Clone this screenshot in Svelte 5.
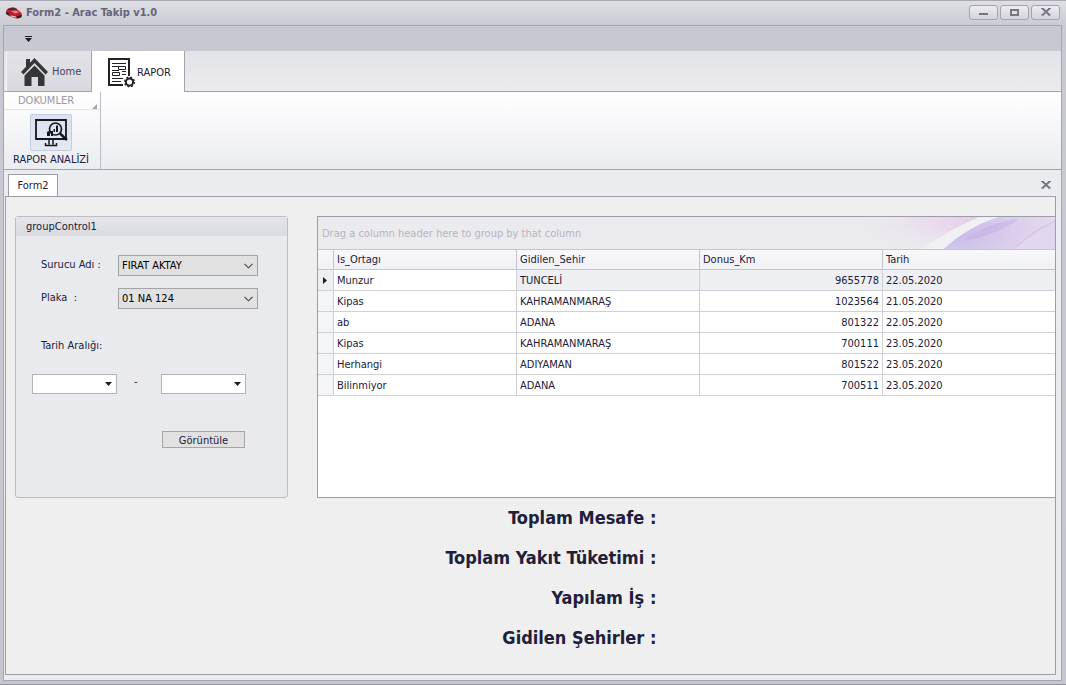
<script>
  let driver = $state('FIRAT AKTAY');
  let plate = $state('01 NA 124');
  let from = $state('');
  let to = $state('');

  const rows = [
    { partner: 'Munzur', city: 'TUNCELİ', km: 9655778, date: '22.05.2020' },
    { partner: 'Kipas', city: 'KAHRAMANMARAŞ', km: 1023564, date: '21.05.2020' },
    { partner: 'ab', city: 'ADANA', km: 801322, date: '22.05.2020' },
    { partner: 'Kipas', city: 'KAHRAMANMARAŞ', km: 700111, date: '23.05.2020' },
    { partner: 'Herhangi', city: 'ADIYAMAN', km: 801522, date: '23.05.2020' },
    { partner: 'Bilinmiyor', city: 'ADANA', km: 700511, date: '23.05.2020' }
  ];
  let current = $state(0);

  const totals = ['Toplam Mesafe :', 'Toplam Yakıt Tüketimi :', 'Yapılam İş :', 'Gidilen Şehirler :'];
</script>

{#snippet chevron()}
  <svg class="chevron" width="9" height="6" viewBox="0 0 9 6" aria-hidden="true">
    <path d="M.5 .8 4.5 4.8 8.5 .8" fill="none" stroke="#444" stroke-width="1.1" />
  </svg>
{/snippet}

{#snippet arrow()}
  <svg width="7" height="4" viewBox="0 0 7 4" aria-hidden="true"><path d="M0 0h7L3.5 4z" fill="#1b1b24" /></svg>
{/snippet}

{#snippet cross()}
  <svg width="10" height="8" viewBox="0 0 10 8" aria-hidden="true">
    <path d="M1.500 .5l7 6.500M8.500 .5l-7 6.500" stroke="#777782" stroke-width="2" />
    <path d="M0 0h3v1H0zM7 0h3v1H7zM0 6.500h3v1H0zM7 6.500h3v1H7z" fill="#777782" />
  </svg>
{/snippet}

<div class="window">
  <header class="titlebar">
    <svg width="16" height="12" viewBox="0 0 16 12" aria-hidden="true">
      <path d="M0 4 2 1.500 6 .5l4 .5 3 3 2.500 2 .5 3-2 2-4 .500-7-2.500-2.500-2z" fill="#b8222c" />
      <path d="M1.500 3 4 1l4-.5 3 2.500-3 .5-4-.5z" fill="#4b2b33" />
      <path d="M5 4l5-.5 3 2-4 1z" fill="#ee7f82" />
      <path d="M0 5l3 1v2.500L0 7zM11 9l5-1-1 2.500-4 1z" fill="#26222b" />
      <path d="M5 8.500l5 1v1l-5-1z" fill="#f0d6d8" />
    </svg>
    <h1>Form2 - Arac Takip v1.0</h1>
    <div class="caption-buttons">
      <button aria-label="Minimize"><svg width="10" height="8" viewBox="0 0 10 8"><path d="M0 5h9v2H0z" fill="#777782" /></svg></button>
      <button aria-label="Maximize"><svg width="9" height="7" viewBox="0 0 9 7"><path d="M1 1h7v5H1z" fill="none" stroke="#777782" stroke-width="2" /></svg></button>
      <button aria-label="Close">{@render cross()}</button>
    </div>
  </header>

  <div class="client">
    <div class="quickbar">
      <button aria-label="Customize Quick Access Toolbar">
        <svg width="7" height="6" viewBox="0 0 7 6"><path d="M0 0h7v1H0zM0 2h7L3.500 6z" fill="#1b1b24" /></svg>
      </button>
    </div>

    <nav class="tabs">
      <button class="tab">
        <svg width="27" height="28" viewBox="0 0 27 28" aria-hidden="true">
          <path d="M5 1h4v5l-4 4z" fill="#35363a" />
          <path d="M13.500 0 27 14l-2.500 2.500-11-11.500-11 11.500L0 14z" fill="#35363a" />
          <path d="M13.500 7.500l10 10V28H17v-9h-6.500v9H3.500V17.500z" fill="#35363a" />
        </svg>
        Home
      </button>
      <button class="tab active">
        <svg width="28" height="30" viewBox="0 0 28 30" aria-hidden="true">
          <path d="M21 18V1H1v26h14" fill="none" stroke="#222226" stroke-width="2" />
          <path d="M4 5.500h14M4 8.500h7M14 13.500h4M4 12.500h7M4 20.500h11M4 23.500h9" stroke="#222226" stroke-width="1" />
          <path d="M10.500 8.500h7v3h-7zM4.500 14.500h7v3h-7zM14 16.500h4" fill="none" stroke="#222226" />
          <circle cx="21.500" cy="24" r="3.600" fill="#fff" stroke="#222226" stroke-width="2" />
          <circle cx="21.500" cy="24" r="4.900" fill="none" stroke="#222226" stroke-width="1.400" stroke-dasharray="1.950 1.900" />
        </svg>
        RAPOR
      </button>
    </nav>

    <section class="ribbon">
      <div class="ribbon-group">
        <div class="group-caption">
          <span>DOKUMLER</span>
          <svg width="5" height="5" viewBox="0 0 5 5" aria-hidden="true"><path d="M5 0v5H0z" fill="#a3a3ab" /></svg>
        </div>
        <button class="large">
          <span class="picture">
            <svg width="34" height="30" viewBox="0 0 34 30" aria-hidden="true">
              <path d="M27 2H2v19h30V2h-5" fill="none" stroke="#17181c" stroke-width="1.800" />
              <path d="M15 21v5.500M19 21v5.500M11.500 25v2.500h11V25" fill="none" stroke="#17181c" stroke-width="1.500" />
              <path d="M13 18v-4l1.500-1L16 14v4zM17 18v-5h2v5z" fill="#17181c" />
              <path d="M19.500 14v-3h1.500v3zM22 14V7.500h2V14z" fill="#17181c" />
              <circle cx="21.500" cy="11" r="6" fill="none" stroke="#17181c" stroke-width="1.700" />
              <path d="M26 15.500l7 6.500" stroke="#17181c" stroke-width="2.400" />
            </svg>
          </span>
          RAPOR ANALİZİ
        </button>
      </div>
    </section>

    <main class="document">
      <div class="doc-tabs">
        <button class="doc-tab">Form2</button>
        <button class="doc-close" aria-label="Close Form2">{@render cross()}</button>
      </div>

      <div class="page">
        <div class="panels">
          <form class="filter" onsubmit={(e) => e.preventDefault()}>
            <h2>groupControl1</h2>
            <div class="filter-body">
              <div class="field">
                <label for="driver">Surucu Adı :</label>
                <span class="select">
                  <select id="driver" bind:value={driver}><option>FIRAT AKTAY</option></select>
                  {@render chevron()}
                </span>
              </div>
              <div class="field">
                <label for="plate">Plaka &nbsp;:</label>
                <span class="select">
                  <select id="plate" bind:value={plate}><option>01 NA 124</option></select>
                  {@render chevron()}
                </span>
              </div>
              <label class="range-label" for="from">Tarih Aralığı:</label>
              <div class="range">
                <span class="date">
                  <input id="from" type="text" bind:value={from} />
                  <button type="button" aria-label="Başlangıç tarihi">{@render arrow()}</button>
                </span>
                <span class="dash">-</span>
                <span class="date">
                  <input type="text" aria-label="Bitiş tarihi" bind:value={to} />
                  <button type="button" aria-label="Bitiş tarihini seç">{@render arrow()}</button>
                </span>
              </div>
              <button class="submit">Görüntüle</button>
            </div>
          </form>

          <section class="grid">
            <div class="group-panel">
              <span>Drag a column header here to group by that column</span>
              <svg width="200" height="32" viewBox="0 0 200 32" aria-hidden="true">
                <defs>
                  <linearGradient id="pink" x1="0" x2="1" y1="0.100" y2="0">
                    <stop offset="0" stop-color="#ebebef" />
                    <stop offset="0.350" stop-color="#ebe5ee" />
                    <stop offset="0.700" stop-color="#e9d8ec" />
                    <stop offset="1" stop-color="#e2cdea" />
                  </linearGradient>
                  <linearGradient id="fade" x1="0" x2="0" y1="0" y2="1">
                    <stop offset="0.300" stop-color="#ebebef" stop-opacity="0" />
                    <stop offset="1" stop-color="#ebebef" stop-opacity="0.900" />
                  </linearGradient>
                  <linearGradient id="violet" x1="0" x2="1" y1="0.300" y2="0">
                    <stop offset="0" stop-color="#c3b2e8" />
                    <stop offset="0.500" stop-color="#d8c9ec" />
                    <stop offset="1" stop-color="#e6dcee" />
                  </linearGradient>
                </defs>
                <path d="M0 0H124Q100 20 66 32H0z" fill="url(#pink)" />
                <path d="M0 0H124Q100 20 66 32H0z" fill="url(#fade)" />
                <path d="M66 32Q96 12 124 0h20Q112 12 89 32z" fill="#f0f0f4" />
                <path d="M89 32Q112 10 144 0h56v32z" fill="url(#violet)" />
                <path d="M89 32Q112 10 144 0h56v32z" fill="url(#fade)" opacity=".4" />
                <path d="M108 24Q134 5 164 2 142 18 108 24z" fill="#bda9e4" opacity=".4" />
                <path d="M159 32Q178 14 200 4v28z" fill="#e0d6ee" />
                <path d="M159 32Q178 14 200 4" fill="none" stroke="#cfbde2" />
              </svg>
            </div>
            <table>
              <colgroup>
                <col class="indicator" /><col class="data" /><col class="data" /><col class="data" /><col />
              </colgroup>
              <thead>
                <tr><th></th><th>Is_Ortagı</th><th>Gidilen_Sehir</th><th>Donus_Km</th><th>Tarih</th></tr>
              </thead>
              <tbody>
                {#each rows as row, i}
                  <tr class:current={i === current} onclick={() => (current = i)}>
                    <td class="mark">
                      {#if i === current}
                        <svg width="4" height="7" viewBox="0 0 4 7" aria-hidden="true"><path d="M0 0 4 3.500 0 7z" fill="#1b1b24" /></svg>
                      {/if}
                    </td>
                    <td class="focused">{row.partner}</td>
                    <td>{row.city}</td>
                    <td class="number">{row.km}</td>
                    <td>{row.date}</td>
                  </tr>
                {/each}
              </tbody>
            </table>
          </section>
        </div>

        <div class="totals">
          {#each totals as total}
            <p>{total}</p>
          {/each}
        </div>
      </div>
    </main>
  </div>
</div>

<style>
  :global(body) {
    margin: 0;
  }
  * {
    box-sizing: border-box;
  }
  .window {
    display: flex;
    flex-direction: column;
    min-height: 100vh;
    padding: 0 4px 3px 3px;
    border-bottom: 1px solid #9696a3;
    border-top: 1px solid #a9a9b4;
    background: linear-gradient(#dedee4, #c9c9d2 26px, #c6c6d0);
    color: #20203a;
    font: 11px/16px 'DejaVu Sans Condensed', 'DejaVu Sans', sans-serif;
  }
  button,
  input,
  select {
    margin: 0;
    padding: 0;
    border: 0;
    background: none;
    color: inherit;
    font: inherit;
  }
  svg {
    display: block;
    flex: none;
  }
  h1,
  h2,
  p {
    margin: 0;
  }

  .titlebar {
    display: flex;
    align-items: center;
    height: 24px;
    padding: 0 2px 0 3px;
    gap: 4px;
  }
  h1 {
    flex: 1;
    color: #65657a;
    font-size: 11px;
    font-weight: bold;
  }
  .caption-buttons {
    display: flex;
    gap: 2px;
    padding-bottom: 2px;
  }
  .caption-buttons button {
    display: grid;
    place-items: center;
    width: 29px;
    height: 15px;
    border: 1px solid #a3a3ae;
    border-radius: 3px;
    background: linear-gradient(#ececf0, #d4d4dc);
  }

  .client {
    display: flex;
    flex: 1;
    flex-direction: column;
    border: 1px solid #a6a6b2;
    background: #ebecef;
  }
  .quickbar {
    display: flex;
    height: 25px;
    padding-left: 20px;
    background: #c8c8d1;
  }
  .quickbar button {
    display: grid;
    place-items: center;
    width: 8px;
  }
  .tabs {
    display: flex;
    height: 41px;
    padding-left: 2px;
    border-bottom: 1px solid #a3a3ae;
    background: linear-gradient(#e2e3e7, #ebebee);
  }
  .tab {
    display: flex;
    align-items: center;
    gap: 4px;
    width: 85px;
    height: 40px;
    padding: 2px 0 0 14px;
    border-left: 1px solid #f5f5f8;
    background: linear-gradient(#e3e3e7, #d9d9df);
    color: #44445a;
  }
  .tab.active {
    gap: 1px;
    width: 94px;
    height: 41px;
    padding-left: 16px;
    border-right: 1px solid #a3a3ae;
    border-left: 1px solid #a3a3ae;
    background: #fff;
    color: #20203a;
  }
  .ribbon {
    display: flex;
    height: 78px;
    border-bottom: 1px solid #a3a3ae;
    background: linear-gradient(#fff, #ebecf0);
  }
  .ribbon-group {
    width: 97px;
    border-right: 1px solid #bcbcc5;
  }
  .group-caption {
    display: flex;
    align-items: flex-end;
    justify-content: space-between;
    height: 18px;
    padding: 0 3px 0 14px;
    border-bottom: 1px solid #e3e3e8;
    color: #9898a2;
  }
  .large {
    display: flex;
    flex-direction: column;
    align-items: center;
    gap: 1px;
    width: 94px;
    padding-top: 4px;
    white-space: nowrap;
  }
  .picture {
    display: grid;
    place-items: center;
    width: 42px;
    height: 37px;
    border: 1px solid #c3cbdf;
    border-radius: 2px;
    background: linear-gradient(#dbe1f3, #e4e8f3);
  }

  .document {
    display: flex;
    flex: 1;
    flex-direction: column;
    padding: 4px 5px 5px 1px;
  }
  .doc-tabs {
    display: flex;
    justify-content: space-between;
    padding: 0 5px 0 3px;
  }
  .doc-tab {
    width: 50px;
    height: 23px;
    margin-bottom: -1px;
    border: 1px solid #9d9da8;
    border-bottom: 0;
    background: #fff;
  }
  .doc-close {
    display: grid;
    place-items: center;
    height: 21px;
  }
  .page {
    flex: 1;
    padding-top: 19px;
    border: 1px solid #9d9da8;
    background: #efefef;
  }
  .panels {
    display: flex;
    gap: 29px;
    min-height: 282px;
    padding-left: 9px;
  }
  .filter {
    width: 273px;
    border: 1px solid #bcbdc6;
    border-radius: 3px;
    background: #e9eaee;
  }
  h2 {
    height: 19px;
    padding: 2px 10px 0;
    background: linear-gradient(#e4e5e9, #dadbe1);
    font-size: 11px;
    font-weight: normal;
  }
  .filter-body {
    display: flex;
    flex-direction: column;
    padding: 19px 29px 0 16px;
  }
  .field {
    display: flex;
    justify-content: space-between;
    margin-bottom: 12px;
    padding-left: 9px;
  }
  .field label {
    padding-top: 2px;
  }
  .select {
    display: grid;
    grid-template-columns: 1fr 18px;
    width: 140px;
    height: 21px;
    border: 1px solid #a4a4a8;
    background: #e1e1e1;
  }
  select {
    grid-area: 1 / 1 / 2 / 3;
    appearance: none;
    padding: 1px 18px 0 3px;
    color: #000;
  }
  .chevron {
    grid-area: 1 / 2;
    align-self: center;
    justify-self: center;
    pointer-events: none;
  }
  .range-label {
    margin-top: 17px;
    padding-left: 9px;
  }
  .range {
    display: flex;
    margin-top: 20px;
  }
  .dash {
    width: 44px;
    padding-left: 17px;
  }
  .date {
    display: flex;
    width: 85px;
    height: 20px;
    border: 1px solid #b4b4ba;
    background: #fff;
  }
  .date input {
    flex: 1;
    min-width: 0;
    padding: 0 2px;
  }
  .date button {
    display: grid;
    place-items: center;
    width: 15px;
  }
  .submit {
    align-self: flex-end;
    width: 83px;
    height: 17px;
    margin: 37px 13px 0 0;
    border: 1px solid #a6a6aa;
    background: #e1e1e1;
    line-height: 17px;
  }

  .grid {
    flex: 1;
    min-width: 0;
    border: 1px solid #9d9da8;
    border-right: 0;
    background: #fff;
  }
  .group-panel {
    display: flex;
    align-items: center;
    justify-content: space-between;
    height: 33px;
    padding-left: 4px;
    overflow: hidden;
    border-bottom: 1px solid #c6c7ce;
    background: #ebebef;
    color: #b5b5bc;
    white-space: nowrap;
  }
  .group-panel span {
    padding-top: 2px;
  }
  table {
    width: 100%;
    border-spacing: 0;
    table-layout: fixed;
  }
  .indicator {
    width: 16px;
  }
  .data {
    width: 183px;
  }
  th,
  td {
    height: 21px;
    padding: 0 3px;
    overflow: hidden;
    border-right: 1px solid #cfd0d6;
    border-bottom: 1px solid #cfd0d6;
    text-align: left;
    white-space: nowrap;
  }
  th {
    height: 20px;
    border-color: #c3c4cc;
    background: linear-gradient(#f8f8fa, #f0f1f4);
    font-weight: normal;
  }
  td {
    padding-top: 2px;
  }
  th:last-child,
  td:last-child {
    border-right: 0;
  }
  td.number {
    text-align: right;
  }
  td.mark {
    padding: 0 5px;
    background: #f4f5f8;
  }
  .current td {
    background: #eeeff2;
  }
  .current td.focused {
    background: #fff;
  }

  .totals {
    display: grid;
    gap: 16px;
    width: 62%;
    padding-top: 8px;
    font-size: 18px;
    font-weight: bold;
    line-height: 24px;
    text-align: right;
  }
</style>
